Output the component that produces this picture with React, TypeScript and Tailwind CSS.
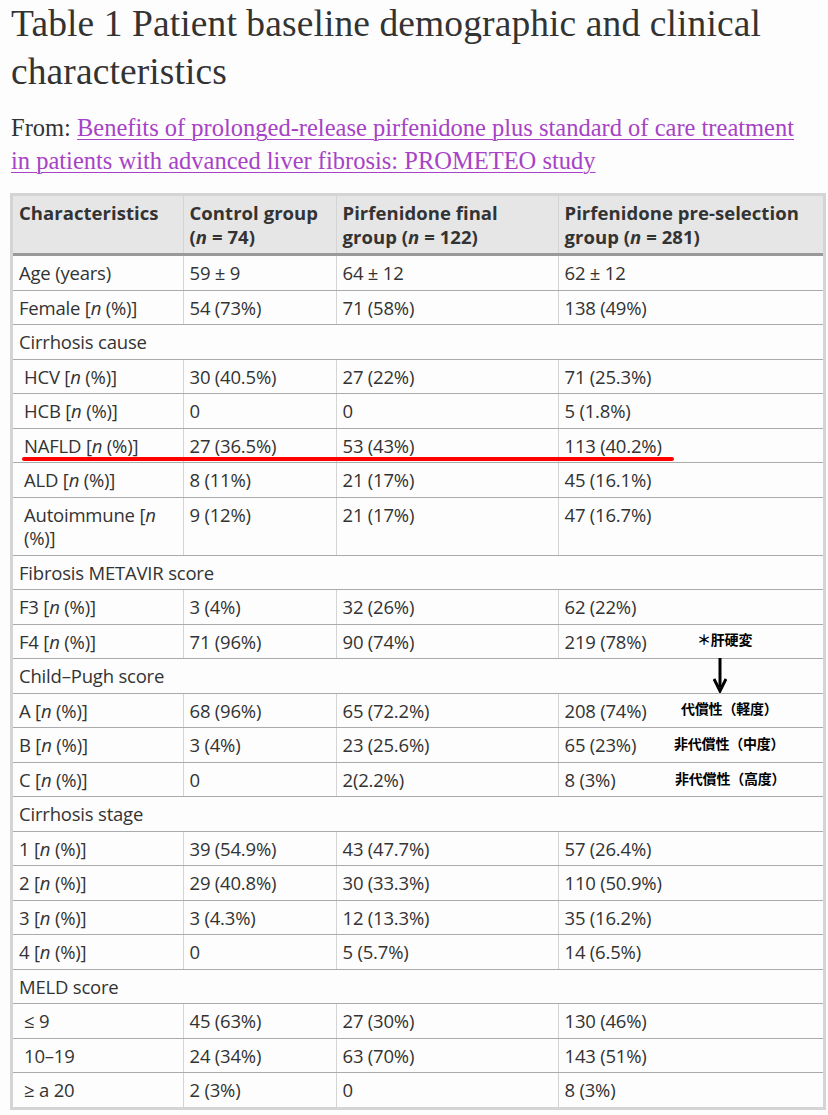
const rows: { c: string[]; section?: boolean; indent?: boolean }[] = [
  { c: ["Age (years)", "59 ± 9", "64 ± 12", "62 ± 12"] },
  { c: ["Female [n (%)]", "54 (73%)", "71 (58%)", "138 (49%)"] },
  { c: ["Cirrhosis cause"], section: true },
  { c: ["HCV [n (%)]", "30 (40.5%)", "27 (22%)", "71 (25.3%)"], indent: true },
  { c: ["HCB [n (%)]", "0", "0", "5 (1.8%)"], indent: true },
  { c: ["NAFLD [n (%)]", "27 (36.5%)", "53 (43%)", "113 (40.2%)"], indent: true },
  { c: ["ALD [n (%)]", "8 (11%)", "21 (17%)", "45 (16.1%)"], indent: true },
  { c: ["Autoimmune [n (%)]", "9 (12%)", "21 (17%)", "47 (16.7%)"], indent: true },
  { c: ["Fibrosis METAVIR score"], section: true },
  { c: ["F3 [n (%)]", "3 (4%)", "32 (26%)", "62 (22%)"] },
  { c: ["F4 [n (%)]", "71 (96%)", "90 (74%)", "219 (78%)"] },
  { c: ["Child–Pugh score"], section: true },
  { c: ["A [n (%)]", "68 (96%)", "65 (72.2%)", "208 (74%)"] },
  { c: ["B [n (%)]", "3 (4%)", "23 (25.6%)", "65 (23%)"] },
  { c: ["C [n (%)]", "0", "2(2.2%)", "8 (3%)"] },
  { c: ["Cirrhosis stage"], section: true },
  { c: ["1 [n (%)]", "39 (54.9%)", "43 (47.7%)", "57 (26.4%)"] },
  { c: ["2 [n (%)]", "29 (40.8%)", "30 (33.3%)", "110 (50.9%)"] },
  { c: ["3 [n (%)]", "3 (4.3%)", "12 (13.3%)", "35 (16.2%)"] },
  { c: ["4 [n (%)]", "0", "5 (5.7%)", "14 (6.5%)"] },
  { c: ["MELD score"], section: true },
  { c: ["≤ 9", "45 (63%)", "27 (30%)", "130 (46%)"], indent: true },
  { c: ["10–19", "24 (34%)", "63 (70%)", "143 (51%)"], indent: true },
  { c: ["≥ a 20", "2 (3%)", "0", "8 (3%)"], indent: true },
];

// render "[n (%)]" with italic n
const Label = ({ text }: { text: string }) => {
  const i = text.indexOf("[n ");
  if (i < 0) return <>{text}</>;
  return (
    <>
      {text.slice(0, i)}[<i>n</i>
      {text.slice(i + 2)}
    </>
  );
};

const td = "px-[6px] py-[5px] align-top border-b border-b-[#ababab] border-r border-r-[#d4d4d4] last:border-r-0";
const th = "px-[6px] py-[5px] text-left align-top font-bold tracking-[0.05px]";
const note = "absolute font-['Noto_Sans_CJK_JP',sans-serif] text-[14px] font-bold leading-[20px] text-black";

export default function App() {
  return (
    <div className="min-h-[1115px] bg-[#fdfdfd] text-[#333] pl-[11px] pr-[2px]">
      <h1 className="font-['Liberation_Serif',serif] text-[37.5px] leading-[48px] text-[#333] tracking-[0.1px]">
        Table 1 Patient baseline demographic and clinical characteristics
      </h1>
      <p className="mt-[15px] font-['Liberation_Serif',serif] text-[24.5px] leading-[33px] text-[#333] pr-[10px]">
        From:{" "}
        <a href="#" className="text-[#a742c6] underline underline-offset-[3px] decoration-1">
          Benefits of prolonged-release pirfenidone plus standard of care treatment in patients with advanced liver fibrosis: PROMETEO study
        </a>
      </p>

      <div className="relative mt-[16px] -ml-[1px] w-[816px] border-[3px] border-[#d4d4d4] font-['Open_Sans',sans-serif] text-[18.5px] leading-[23.5px] text-[#333] tracking-[-0.2px]">
        <table className="w-full table-fixed border-collapse">
          <colgroup>
            <col className="w-[170px]" />
            <col className="w-[153px]" />
            <col className="w-[222px]" />
            <col className="w-[265px]" />
          </colgroup>
          <thead>
            <tr className="bg-[#e6e6e6] border-b-[3px] border-b-[#999]">
              <th className={th + " border-r border-r-[#d4d4d4]"}>Characteristics</th>
              <th className={th + " border-r border-r-[#d4d4d4]"}>
                Control group (<i>n</i> = 74)
              </th>
              <th className={th + " border-r border-r-[#d4d4d4]"}>
                Pirfenidone final group (<i>n</i> = 122)
              </th>
              <th className={th}>
                Pirfenidone pre-selection group (<i>n</i> = 281)
              </th>
            </tr>
          </thead>
          <tbody>
            {rows.map((r, idx) =>
              r.section ? (
                <tr key={idx}>
                  <td colSpan={4} className="px-[6px] py-[5px] border-b border-b-[#ababab]">
                    {r.c[0]}
                  </td>
                </tr>
              ) : (
                <tr key={idx} className="last:[&>td]:border-b-0">
                  <td className={td + (r.indent ? " pl-[11px]" : "")}>
                    <Label text={r.c[0]} />
                  </td>
                  <td className={td}>{r.c[1]}</td>
                  <td className={td}>{r.c[2]}</td>
                  <td className={td}>{r.c[3]}</td>
                </tr>
              )
            )}
          </tbody>
        </table>

        {/* red underline on the NAFLD row */}
        <div className="absolute left-[9px] top-[261px] w-[652px] h-[4px] rounded-full bg-[#ff0000]" />

        {/* handwritten notes */}
        <div className={note + " left-[684px] top-[433px]"}>＊肝硬変</div>
        <svg className="absolute left-[700px] top-[462px]" width="14" height="35" viewBox="0 0 14 35">
          <path d="M7 0 V29" stroke="black" strokeWidth="3" />
          <path d="M1 21 L7 33 L13 21" stroke="black" strokeWidth="3" fill="none" />
        </svg>
        <div className={note + " left-[668px] top-[502px]"}>代償性（軽度）</div>
        <div className={note + " left-[661px] top-[537px]"}>非代償性（中度）</div>
        <div className={note + " left-[662px] top-[572px]"}>非代償性（高度）</div>
      </div>
    </div>
  );
}
